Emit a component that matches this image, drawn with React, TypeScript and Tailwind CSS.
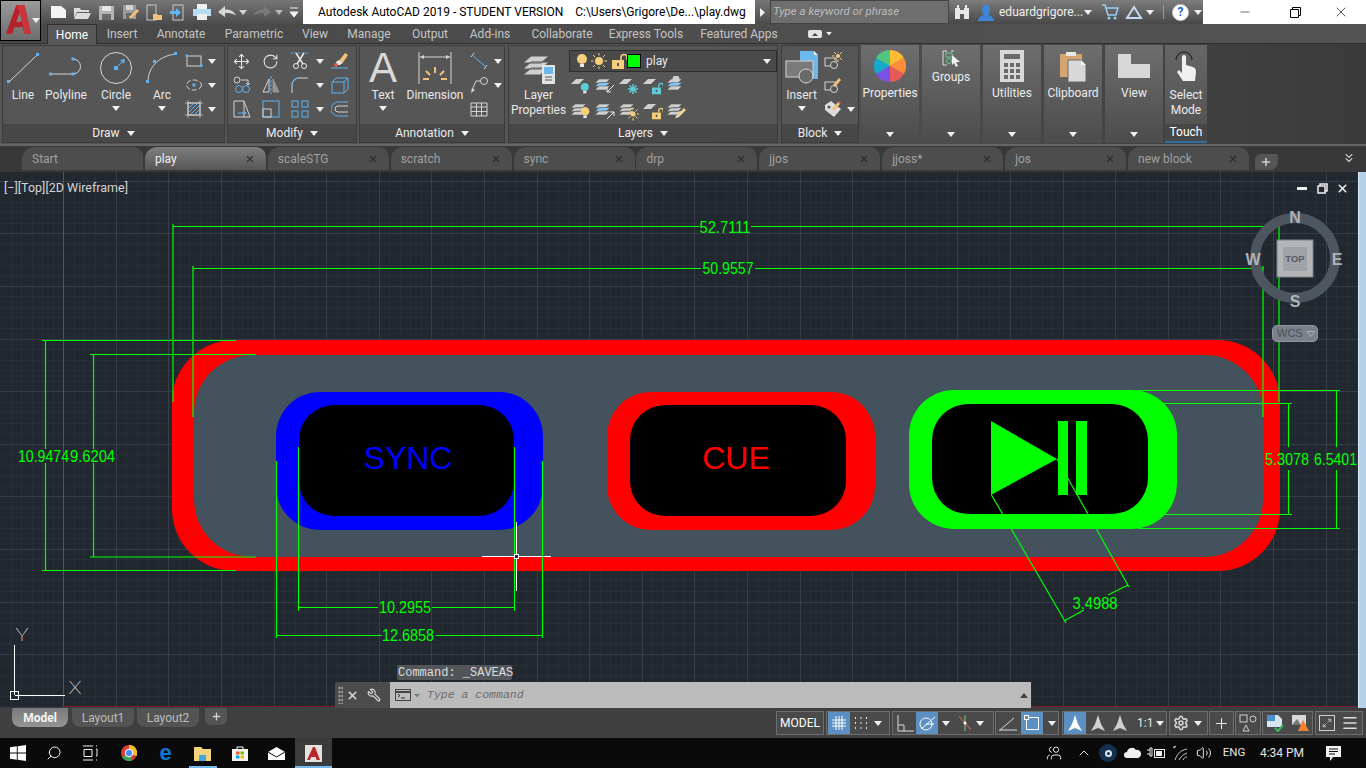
import type { ReactNode } from 'react';
import { Move, RotateCw, Minus, Plus, X, Search, Settings, Volume2, ChevronUp, ChevronsDown, Wrench, Users, Maximize2, Menu } from 'lucide-react';

const GRIP = '#5cb2f2';
const LINE = '#d4d4d4';

/* ---------- small helpers ---------- */

function Caret({ className = '' }: { className?: string }) {
  return (
    <svg width="8" height="5" viewBox="0 0 8 5" className={`block shrink-0 ${className}`}>
      <path d="M0 0h8L4 5z" fill="#f0f0f0" />
    </svg>
  );
}

function Ic({ w = 18, h = 18, children }: { w?: number; h?: number; children: ReactNode }) {
  return (
    <svg width={w} height={h} viewBox={`0 0 ${w} ${h}`} className="block shrink-0" fill="none">
      {children}
    </svg>
  );
}

function Panel({ title, className, children }: { title: string; className: string; children: ReactNode }) {
  return (
    <div className={`flex h-[98px] flex-col bg-[#565656] shadow-[inset_0_0_0_1px_#3c3c3c] ${className}`}>
      <div className="flex flex-1 pt-[4px]">{children}</div>
      <div className="mx-px mb-px flex h-[18px] items-center justify-center gap-[7px] bg-[#474747] text-[#ececec]">
        {title}
        <Caret />
      </div>
    </div>
  );
}

function BigTool({ label, className, icon, caret }: { label: string; className: string; icon: ReactNode; caret?: boolean }) {
  return (
    <div className={`flex flex-col items-center ${className}`}>
      <div className="flex h-[38px] items-center justify-center">{icon}</div>
      <div className="mt-[1px] whitespace-pre-line text-center leading-[15px] text-[#e8e8e8]">{label}</div>
      {caret && <Caret className="mt-[3px]" />}
    </div>
  );
}

function Collapsed({ label, className, icon, labelClass }: { label: string; className: string; icon: ReactNode; labelClass: string }) {
  return (
    <div className={`flex h-[98px] flex-col items-center rounded-[1px] bg-gradient-to-b from-[#6e6e6e] to-[#4c4c4c] ${className}`}>
      <div className="mt-[5px] flex h-[33px] items-start justify-center">{icon}</div>
      <div className={`text-[#ececec] ${labelClass}`}>{label}</div>
      <Caret className="mt-auto mb-[6px]" />
    </div>
  );
}

/* ---------- ribbon icons ---------- */

const LineIcon = () => (
  <Ic w={34} h={33}>
    <path d="M3 30L31 3" stroke={LINE} />
    <rect x="1" y="28" width="3" height="3" fill={GRIP} />
    <rect x="30" y="1" width="3" height="3" fill={GRIP} />
  </Ic>
);
const PolylineIcon = () => (
  <Ic w={36} h={26}>
    <path d="M3 19H25M25 4a7.5 7.5 0 0 1 0 15" stroke={LINE} />
    <rect x="1" y="17.500" width="3" height="3" fill={GRIP} />
    <rect x="23.500" y="17.500" width="3" height="3" fill={GRIP} />
    <rect x="23.500" y="2.500" width="3" height="3" fill={GRIP} />
  </Ic>
);
const CircleIcon = () => (
  <Ic w={34} h={34}>
    <circle cx="17" cy="17" r="15.500" stroke={LINE} />
    <path d="M17 17L25 9" stroke={GRIP} />
    <path d="M26 8l-5 1 4 4z" fill={GRIP} />
    <rect x="15" y="15" width="4" height="4" fill={GRIP} />
  </Ic>
);
const ArcIcon = () => (
  <Ic w={34} h={34}>
    <path d="M3 31C3 17 13 5 31 3" stroke={LINE} />
    <rect x="1" y="29" width="3" height="3" fill={GRIP} />
    <rect x="29" y="1" width="3" height="3" fill={GRIP} />
    <rect x="8" y="9" width="3" height="3" fill={GRIP} />
  </Ic>
);
const RectIcon = () => (
  <Ic w={18} h={14}>
    <rect x="2" y="2" width="14" height="10" stroke={LINE} />
    <rect x="0.500" y="0.500" width="2.500" height="2.500" fill={GRIP} />
    <rect x="15" y="10.500" width="2.500" height="2.500" fill={GRIP} />
  </Ic>
);
const EllipseIcon = () => (
  <Ic w={18} h={14}>
    <ellipse cx="9" cy="7" rx="7.500" ry="5" stroke={LINE} strokeDasharray="5 2" />
    <rect x="7.500" y="5.500" width="3" height="3" fill={GRIP} />
  </Ic>
);
const HatchIcon = () => (
  <Ic w={18} h={18}>
    <rect x="3" y="3" width="12" height="12" stroke={LINE} />
    <path d="M4 12l8-8M6 14l8-8M4 8l4-4M10 14l4-4" stroke={GRIP} />
    <path d="M3 0v18M15 0v18M0 3h18M0 15h18" stroke={LINE} strokeWidth="0.700" />
  </Ic>
);
const TrimIcon = () => (
  <Ic w={18} h={18}>
    <path d="M0 1h18" stroke={GRIP} strokeDasharray="2 1.500" />
    <path d="M5 1l7 11M13 1L6 12" stroke="#e8e8e8" strokeWidth="1.500" />
    <circle cx="5" cy="14" r="2.500" stroke="#e8e8e8" />
    <circle cx="13" cy="14" r="2.500" stroke="#e8e8e8" />
  </Ic>
);
const EraseIcon = () => (
  <Ic w={18} h={18}>
    <path d="M7 10L14 1l3 2-6 9z" fill="#f3c27a" />
    <path d="M5 10l3-2 3 3-2 2H5z" fill="#e8e8e8" />
    <circle cx="5" cy="13" r="2" fill="#e2574c" />
    <path d="M0 16h17" stroke={GRIP} />
  </Ic>
);
const CopyIcon = () => (
  <Ic w={18} h={18}>
    <circle cx="4" cy="4" r="3" stroke={LINE} />
    <path d="M8 4h7v4M13 7l2 2 2-2" stroke={LINE} />
    <circle cx="6" cy="13" r="3.500" stroke={GRIP} />
    <circle cx="13" cy="13" r="3.500" stroke={GRIP} />
  </Ic>
);
const MirrorIcon = () => (
  <Ic w={18} h={18}>
    <path d="M7 3v13H1z" stroke={LINE} />
    <path d="M11 3v13h6z" fill={LINE} opacity=".5" stroke={LINE} />
    <path d="M9 0v18" stroke={GRIP} strokeDasharray="3 1" />
  </Ic>
);
const FilletIcon = () => (
  <Ic w={18} h={18}>
    <path d="M1 17V9a7 7 0 0 1 7-7h9" stroke={LINE} />
    <path d="M1 9a7 7 0 0 1 7-7" stroke={GRIP} />
  </Ic>
);
const BoxIcon = () => (
  <Ic w={18} h={18}>
    <path d="M1 6h12v11H1zM1 6l4-4h12v11l-4 4M13 6l4-4" stroke={GRIP} />
  </Ic>
);
const StretchIcon = () => (
  <Ic w={18} h={18}>
    <path d="M1 1h10v16H1zM11 1l6 16h-6" stroke={LINE} />
    <path d="M5 13h8m-2-2l2 2-2 2" stroke={GRIP} />
  </Ic>
);
const ScaleIcon = () => (
  <Ic w={18} h={18}>
    <rect x="1" y="1" width="16" height="16" stroke={GRIP} />
    <rect x="1" y="9" width="8" height="8" stroke={LINE} />
  </Ic>
);
const ArrayIcon = () => (
  <Ic w={18} h={18}>
    <rect x="1" y="1" width="6" height="6" stroke={GRIP} />
    <rect x="11" y="1" width="6" height="6" stroke={GRIP} />
    <rect x="1" y="11" width="6" height="6" stroke={GRIP} />
    <rect x="11" y="11" width="6" height="6" stroke={GRIP} />
  </Ic>
);
const OffsetIcon = () => (
  <Ic w={18} h={16}>
    <path d="M17 1H7a7 7 0 0 0 0 14h10" stroke={GRIP} />
    <path d="M17 5H7a3 3 0 0 0 0 6h10" stroke={LINE} />
  </Ic>
);
const DimensionIcon = () => (
  <Ic w={34} h={34}>
    <path d="M1 1v32M33 1v32" stroke={LINE} />
    <path d="M2 6h30" stroke={LINE} />
    <path d="M2 6l4-2v4zM32 6l-4-2v4z" fill={LINE} />
    <path d="M17 16v6M8 20l4 4M26 20l-4 4M5 28h6M23 28h6" stroke="#f3c27a" strokeWidth="2" />
  </Ic>
);
const LinearIcon = () => (
  <Ic w={18} h={18}>
    <path d="M4 1L1 5M17 13l-3 4" stroke={LINE} />
    <path d="M2 3l14 12" stroke={GRIP} />
  </Ic>
);
const LeaderIcon = () => (
  <Ic w={18} h={18}>
    <circle cx="14" cy="5" r="3.500" stroke={LINE} />
    <path d="M10 5H6L2 14" stroke={LINE} />
    <path d="M1 17l1-5 3 2z" fill={LINE} />
  </Ic>
);
const TableIcon = () => (
  <Ic w={18} h={15}>
    <path d="M1 1h16v13H1zM1 5h16M1 9.500h16M6.500 1v13M11.500 1v13" stroke={LINE} />
  </Ic>
);
const LayerPropsIcon = () => (
  <Ic w={34} h={34}>
    <path d="M1 12L9 5h18l-8 7zM1 18l8-7h18l-8 7zM1 24l8-7h14l-4 7z" fill="#cfcfcf" stroke="#565656" />
    <rect x="20" y="14" width="13" height="19" rx="1" fill="#e4e4e4" />
    <rect x="22" y="16" width="9" height="7" fill="#6bb7ee" />
    <path d="M23 26h7M23 29h7" stroke="#555" />
  </Ic>
);
const Bulb = ({ color = '#f7cf7a' }: { color?: string }) => (
  <>
    <circle cx="6" cy="5" r="5" fill={color} />
    <rect x="4" y="10" width="4" height="3" fill="#e8e8e8" />
  </>
);
const Sun = ({ color = '#f7cf7a', cx = 8, cy = 8, r = 4 }: { color?: string; cx?: number; cy?: number; r?: number }) => (
  <>
    <circle cx={cx} cy={cy} r={r} fill={color} />
    <path
      d={`M${cx} ${cy - r - 4}v2.500M${cx} ${cy + r + 1.5}v2.500M${cx - r - 4} ${cy}h2.500M${cx + r + 1.5} ${cy}h2.500M${cx - r - 2} ${cy - r - 2}l2 2M${cx + r} ${cy + r}l2 2M${cx + r + 2} ${cy - r - 2}l-2 2M${cx - r} ${cy + r}l-2 2`}
      stroke={color}
    />
  </>
);
const Lock = ({ color = '#f7cf7a', x = 0, y = 0, s = 1 }: { color?: string; x?: number; y?: number; s?: number }) => (
  <g transform={`translate(${x} ${y}) scale(${s})`}>
    <path d="M9 6V3.500a3 3 0 0 1 6 0V6" stroke={color} strokeWidth="1.600" />
    <rect x="0" y="6" width="12" height="9" fill={color} />
    <rect x="5" y="9" width="2" height="3" fill="#565656" />
  </g>
);

function Plane({ kind, children }: { kind: 'one' | 'stack' | 'blue'; children?: ReactNode }) {
  return (
    <Ic w={20} h={20}>
      {kind === 'one' && <path d="M0 8l5-5h8l-5 5z" fill="#cfcfcf" />}
      {kind === 'stack' && <path d="M0 7l4-4h11l-4 4zM0 10.500l4-4h11l-4 4zM0 14l4-4h11l-4 4z" fill="#cfcfcf" stroke="#565656" strokeWidth=".6" />}
      {kind === 'blue' && (
        <>
          <path d="M0 7l4-4h11l-4 4z" fill="#cfcfcf" stroke="#565656" strokeWidth=".6" />
          <path d="M0 10.500l4-4h11l-4 4z" fill="#7fc4f2" stroke="#565656" strokeWidth=".6" />
          <path d="M0 14l4-4h11l-4 4z" fill="#cfcfcf" stroke="#565656" strokeWidth=".6" />
        </>
      )}
      {children}
    </Ic>
  );
}

const layerRowIcons = [
  <Plane kind="one"><g transform="translate(9 7) scale(.8)"><Bulb color="#5fcbd9" /></g></Plane>,
  <Plane kind="blue"><path d="M19 9l-7 7m0-4v4h4" stroke="#e8e8e8" /></Plane>,
  <Plane kind="one"><path d="M14 8v10M9 13h10M10.500 9.500l7 7M17.500 9.500l-7 7" stroke="#5fcbd9" strokeWidth="1.500" /></Plane>,
  <Plane kind="one"><Lock color="#5fcbd9" x={9} y={7} s={0.75} /></Plane>,
  <Plane kind="blue"><circle cx="9" cy="3" r="3.500" fill="#cfcfcf" /></Plane>,
  <Plane kind="stack"><g transform="translate(9 6) scale(.85)"><Bulb /></g></Plane>,
  <Plane kind="blue"><path d="M12 18l7-7m0 4v-4h-4" stroke="#e8e8e8" /></Plane>,
  <Plane kind="stack"><Sun cx={14} cy={13} r={2.5} /></Plane>,
  <Plane kind="one"><Lock x={9} y={7} s={0.75} /></Plane>,
  <Plane kind="stack"><path d="M10 14l7-7 2 2-7 7z" fill="#f3d38f" /><path d="M10 14l-2 3 4-1z" fill="#fff" /></Plane>,
];

const InsertIcon = () => (
  <Ic w={34} h={34}>
    <path d="M15 0h14l4 4v24H15z" fill="#6bb7ee" />
    <path d="M29 0l4 4h-4z" fill="#e8e8e8" />
    <rect x="1" y="10" width="27" height="16" fill="#7b7b7b" stroke="#d4d4d4" />
    <circle cx="21" cy="25" r="7" fill="#6a6a6a" stroke="#d4d4d4" />
  </Ic>
);
const BlockSmall = ({ accent }: { accent: 'sun' | 'pen' }) => (
  <Ic w={18} h={18}>
    <rect x="1" y="6" width="11" height="8" stroke="#d4d4d4" />
    <circle cx="10" cy="13" r="3.500" fill="#565656" stroke="#d4d4d4" />
    {accent === 'sun' ? <Sun cx={14} cy={4} r={2} /> : <path d="M9 9l6-7 2 2-6 7z" fill="#f3c27a" />}
  </Ic>
);
const TagIcon = () => (
  <Ic w={18} h={18}>
    <path d="M1 5l6-4 10 8-7 8-9-7z" fill="#dcdcdc" />
    <circle cx="5" cy="7" r="1.500" fill="#565656" />
    <path d="M8 9l6-7 2 2-6 7z" fill="#f3c27a" />
    <path d="M14 2l2 2 1-1-2-2z" fill="#e2574c" />
  </Ic>
);

const wheel = ['#ffbb33', '#ff8c3a', '#e85a57', '#7b4fe8', '#17a9c9', '#4fc77f'];
const ColorWheel = () => (
  <svg width="32" height="32" viewBox="-16 -16 32 32" className="block">
    {wheel.map((c, i) => {
      const a = (i * Math.PI) / 3 - Math.PI / 2;
      const b = a + Math.PI / 3;
      const p = `M0 0L${16 * Math.cos(a)} ${16 * Math.sin(a)}A16 16 0 0 1 ${16 * Math.cos(b)} ${16 * Math.sin(b)}z`;
      return <path key={c} d={p} fill={c} />;
    })}
  </svg>
);
const GroupsIcon = () => (
  <Ic w={18} h={17}>
    <path d="M5 1H1v14h4M9 1h3" stroke="#dcdcdc" />
    <rect x="4" y="3" width="6" height="4" stroke="#5fd08a" />
    <circle cx="7" cy="11" r="2.500" stroke="#5fd08a" />
    <path d="M10 5l8 7h-4l2 4-2 1-2-4-2 2z" fill="#f0f0f0" />
  </Ic>
);
const CalcIcon = () => (
  <svg width="24" height="32" viewBox="0 0 24 32" className="block">
    <rect width="24" height="32" fill="#d8d8d8" />
    <rect x="4" y="4" width="16" height="5" fill="#6a6a6a" />
    {[13, 19, 25].flatMap((y) => [4, 10, 16].map((x) => <rect key={`${x}-${y}`} x={x} y={y} width="4" height="4" fill="#6a6a6a" />))}
  </svg>
);
const ClipboardIcon = () => (
  <svg width="26" height="32" viewBox="0 0 26 32" className="block">
    <rect x="0" y="4" width="22" height="23" fill="#d6a56f" />
    <rect x="6" y="2" width="10" height="4" fill="#e8e8e8" />
    <path d="M8 10h13l5 5v17H8z" fill="#d8d8d8" stroke="#6a6a6a" />
    <path d="M21 10l5 5h-5z" fill="#f4f4f4" />
  </svg>
);
const ViewIcon = () => (
  <svg width="32" height="24" viewBox="0 0 32 24" className="mt-[4px] block">
    <path d="M0 0h13v10h19v14H0z" fill="#d8d8d8" />
  </svg>
);
const TouchIcon = () => (
  <svg width="24" height="32" viewBox="0 0 24 32" className="block">
    <path d="M2 10a8 8 0 0 1 16 0" stroke="#2a2a2a" strokeWidth="1.300" fill="none" />
    <path d="M8 7a2 2 0 0 1 4 0v8l7 2c2 1 3 2 3 5l-1 9H9l-6-9 2-2 3 3z" fill="#f0f0f0" />
  </svg>
);

/* ---------- title bar ---------- */

const qaIcons = [
  <Ic w={17} h={14}><path d="M1 1h10l5 4v8H1z" fill="#f4f4f4" /></Ic>,
  <Ic w={17} h={14}><path d="M0 3h6l1 2h8v2H3l-3 6zM3 8h14l-3 6H0z" fill="#dcdcdc" /></Ic>,
  <Ic w={17} h={15}><path d="M1 1h15v14H1z" fill="#b4b4b4" /><rect x="4" y="1" width="9" height="5" fill="#e4e4e4" /><rect x="4" y="9" width="9" height="6" fill="#6a6a6a" /></Ic>,
  <Ic w={17} h={16}><path d="M1 1h13v14H1z" fill="#9a9a9a" /><rect x="4" y="1" width="7" height="5" fill="#d4d4d4" /><rect x="4" y="9" width="7" height="6" fill="#6a6a6a" /><path d="M7 13l8-8 2 2-8 8z" fill="#f3c27a" /></Ic>,
  <Ic w={17} h={17}><rect x="1" y="1" width="9" height="15" stroke="#c8c8c8" /><path d="M7 10h4l1 1h4v5H7z" fill="#f3c27a" /></Ic>,
  <Ic w={17} h={17}><rect x="3" y="1" width="10" height="15" stroke="#c8c8c8" /><path d="M0 7h6V4l5 4.500L6 13v-3H0z" fill="#62b8f0" /></Ic>,
  <Ic w={18} h={16}><rect x="4" y="0" width="10" height="5" fill="#efefef" /><rect x="0" y="5" width="18" height="7" fill="#b8dcf4" /><rect x="4" y="10" width="10" height="6" fill="#efefef" /></Ic>,
];

function TitleBar() {
  return (
    <div className="flex h-[24px] shrink-0 items-stretch">
      <div className="flex w-[303px] items-center bg-gradient-to-b from-[#767676] to-[#4c4c4c] pl-[46px]">
        {qaIcons.map((ic, i) => (
          <div key={i} className="flex w-[24px] justify-center">{ic}</div>
        ))}
        <div className="flex w-[25px] justify-center">
          <Ic w={18} h={12}><path d="M0 6l7-6v3.500c5 0 9 1.500 11 6-3-2-6-2.500-11-2.500V11z" fill="#d8d8d8" /></Ic>
        </div>
        <Caret className="opacity-80" />
        <div className="ml-[4px] flex w-[22px] justify-center">
          <Ic w={18} h={12}><path d="M18 6l-7-6v3.500C6 3.500 2 5 0 9.500c3-2 6-2.500 11-2.500V11z" fill="#7a7a7a" /></Ic>
        </div>
        <Caret className="ml-[2px] opacity-60" />
        <div className="ml-[6px]">
          <Ic w={10} h={11}><path d="M1 1h8M1 5h8L5 10z" stroke="#f0f0f0" fill="#f0f0f0" /></Ic>
        </div>
      </div>
      <div className="flex w-[452px] items-center whitespace-pre bg-white pl-[15px] text-black">
        Autodesk AutoCAD 2019 - STUDENT VERSION    C:\Users\Grigore\De...\play.dwg
      </div>
      <div className="flex w-[15px] items-center justify-center bg-gradient-to-b from-[#767676] to-[#4c4c4c]">
        <svg width="5" height="9" viewBox="0 0 5 9" className="block"><path d="M0 0l5 4.500L0 9z" fill="#f0f0f0" /></svg>
      </div>
      <div className="flex w-[179px] items-center border border-[#444] bg-[#6e6e6e] pl-[2px] text-[11.500px] italic text-[#bdbdbd]">
        Type a keyword or phrase
      </div>
      <div className="flex w-[254px] items-center bg-gradient-to-b from-[#7d7d7d] to-[#484848] text-[#f0f0f0]">
        <div className="ml-[5px]">
          <Ic w={16} h={16}><path d="M1 4h5v11H1zM10 4h5v11h-5zM3 1h2v3H3zM11 1h2v3h-2zM6 6h4v4H6z" fill="#e8e8e8" /></Ic>
        </div>
        <div className="ml-[7px]">
          <Ic w={18} h={17}><ellipse cx="9" cy="6" rx="4" ry="5.500" fill="#3d87d8" /><path d="M1 17c1-5 4-6 8-6s7 1 8 6z" fill="#3d87d8" /></Ic>
        </div>
        <span className="ml-[4px] w-[85px] whitespace-nowrap">eduardgrigore...</span>
        <Caret />
        <div className="ml-[10px]">
          <Ic w={17} h={16}><path d="M0 1h3l3 10h8l2-7H4" stroke="#9ad0f4" strokeWidth="1.500" /><circle cx="7" cy="14" r="1.500" fill="#9ad0f4" /><circle cx="13" cy="14" r="1.500" fill="#9ad0f4" /></Ic>
        </div>
        <div className="ml-[6px]">
          <Ic w={18} h={15}><path d="M9 2l7 11H2z" stroke="#c8d8f4" strokeWidth="2" /></Ic>
        </div>
        <Caret className="ml-[3px]" />
        <div className="ml-[9px] h-[14px] w-px bg-[#999]" />
        <div className="ml-[8px] flex h-[17px] w-[17px] items-center justify-center rounded-full border border-[#ccd] bg-white text-[12px] font-bold text-[#1f5fc0]">?</div>
        <Caret className="ml-[5px]" />
      </div>
      <div className="flex flex-1 items-center bg-white pl-[35px]">
        <Minus size={14} strokeWidth={1} className="text-black" />
        <svg width="11" height="11" viewBox="0 0 11 11" className="ml-[38px] block" fill="none"><path d="M.5 2.500h8v8h-8zM2.500 2.500v-2h8v8h-2" stroke="#000" /></svg>
        <X size={16} strokeWidth={1} className="ml-[32px] text-black" />
      </div>
    </div>
  );
}

/* ---------- ribbon ---------- */

const ribbonTabs = [
  { name: 'Home', w: 'w-[50px]' },
  { name: 'Insert', w: 'w-[50px]' },
  { name: 'Annotate', w: 'w-[68px]' },
  { name: 'Parametric', w: 'w-[78px]' },
  { name: 'View', w: 'w-[44px]' },
  { name: 'Manage', w: 'w-[64px]' },
  { name: 'Output', w: 'w-[58px]' },
  { name: 'Add-ins', w: 'w-[62px]' },
  { name: 'Collaborate', w: 'w-[82px]' },
  { name: 'Express Tools', w: 'w-[86px]' },
  { name: 'Featured Apps', w: 'w-[100px]' },
];

function RibbonTabs() {
  return (
    <div className="flex h-[20px] shrink-0 items-stretch border-b border-[#2f2f2f] bg-gradient-to-r from-[#484848] to-[#535353] pl-[47px] text-[#c4c4c4]">
      {ribbonTabs.map((t) => (
        <div
          key={t.name}
          className={`flex items-center justify-center ${t.w} ${t.name === 'Home' ? 'z-10 -mb-px border-x border-t border-[#2f2f2f] bg-[#585858] text-white' : ''}`}
        >
          {t.name}
        </div>
      ))}
      <div className="ml-[19px] flex items-center gap-[3px]">
        <svg width="14" height="8" viewBox="0 0 14 8" className="block"><rect width="14" height="8" rx="2" fill="#e4e4e4" /><path d="M4 6l3-3 3 3z" fill="#444" /></svg>
        <Caret className="scale-75" />
      </div>
    </div>
  );
}

const SmallTools = ({ items, className }: { items: ReactNode[]; className: string }) => (
  <div className={`grid content-start items-center justify-items-center ${className}`}>
    {items.map((it, i) => (
      <div key={i} className="flex h-[24px] items-center justify-center">{it}</div>
    ))}
  </div>
);

const lu = { size: 17, strokeWidth: 1.5, color: '#e4e4e4' };

function Ribbon() {
  return (
    <div className="flex h-[100px] shrink-0 items-start bg-gradient-to-r from-[#565656] via-[#555555] to-[#3a3a3a] pl-[2px] pt-[1px]">
      <Panel title="Draw" className="w-[223px]">
        <BigTool label="Line" className="w-[42px]" icon={<LineIcon />} />
        <BigTool label="Polyline" className="w-[44px]" icon={<PolylineIcon />} />
        <BigTool label="Circle" className="w-[56px]" icon={<CircleIcon />} caret />
        <BigTool label="Arc" className="w-[36px]" icon={<ArcIcon />} caret />
        <SmallTools
          className="ml-[2px] grid-cols-[24px_12px]"
          items={[<RectIcon />, <Caret />, <EllipseIcon />, <Caret />, <HatchIcon />, <Caret />]}
        />
      </Panel>
      <Panel title="Modify" className="ml-[2px] w-[130px]">
        <SmallTools
          className="grid-cols-[29px_29px_29px_12px_28px]"
          items={[
            <Move {...lu} />, <RotateCw {...lu} />, <TrimIcon />, <Caret />, <EraseIcon />,
            <CopyIcon />, <MirrorIcon />, <FilletIcon />, <Caret />, <BoxIcon />,
            <StretchIcon />, <ScaleIcon />, <ArrayIcon />, <Caret />, <OffsetIcon />,
          ]}
        />
      </Panel>
      <Panel title="Annotation" className="ml-[2px] w-[146px]">
        <BigTool
          label="Text"
          className="w-[46px] pl-[2px]"
          caret
          icon={<span className="block h-[36px] font-['Liberation_Sans',sans-serif] text-[42px] leading-[36px] text-[#d8d8d8]">A</span>}
        />
        <BigTool label="Dimension" className="w-[60px]" icon={<DimensionIcon />} />
        <SmallTools className="ml-[1px] grid-cols-[26px_12px]" items={[<LinearIcon />, <Caret />, <LeaderIcon />, <Caret />, <TableIcon />, <span />]} />
      </Panel>
      <Panel title="Layers" className="ml-[3px] w-[270px]">
        <BigTool label={'Layer\nProperties'} className="w-[61px]" icon={<LayerPropsIcon />} />
        <div className="flex flex-col">
          <div className="mt-[1px] flex h-[22px] w-[208px] items-center border border-[#2e2e2e] bg-[#4a4a4a] pr-[5px]">
            <div className="ml-[6px]"><Ic w={12} h={14}><Bulb /></Ic></div>
            <div className="ml-[3px]"><Ic w={16} h={16}><Sun /></Ic></div>
            <div className="ml-[5px]"><Ic w={16} h={16}><Lock y={1} /></Ic></div>
            <div className="ml-[-1px] h-[14px] w-[14px] border border-black bg-[#00ff00]" />
            <span className="ml-[5px] text-[#e8e8e8]">play</span>
            <Caret className="ml-auto" />
          </div>
          <div className="mt-[1px] grid w-[120px] grid-cols-5 justify-items-center">
            {layerRowIcons.map((ic, i) => (
              <div key={i} className="flex h-[25px] items-center">{ic}</div>
            ))}
          </div>
        </div>
      </Panel>
      <Panel title="Block" className="ml-[3px] w-[78px]">
        <BigTool label="Insert" className="w-[41px]" icon={<InsertIcon />} caret />
        <div className="flex flex-col pl-[2px]">
          <div className="flex h-[24px] items-center"><BlockSmall accent="sun" /></div>
          <div className="flex h-[24px] items-center"><BlockSmall accent="pen" /></div>
          <div className="flex h-[24px] items-center gap-[5px]"><TagIcon /><Caret /></div>
        </div>
      </Panel>
      <Collapsed label="Properties" className="ml-[2px] w-[58px]" labelClass="mt-[1px]" icon={<ColorWheel />} />
      <Collapsed label="Groups" className="ml-[3px] w-[58px]" labelClass="-mt-[15px]" icon={<GroupsIcon />} />
      <Collapsed label="Utilities" className="ml-[3px] w-[58px]" labelClass="mt-[1px]" icon={<CalcIcon />} />
      <Collapsed label="Clipboard" className="ml-[3px] w-[58px]" labelClass="mt-[1px]" icon={<ClipboardIcon />} />
      <Collapsed label="View" className="ml-[3px] w-[58px]" labelClass="mt-[1px]" icon={<ViewIcon />} />
      <div className="ml-[2px] flex h-[98px] w-[42px] flex-col items-center bg-gradient-to-b from-[#666666] to-[#505050] text-[#ececec]">
        <div className="mt-[5px]"><TouchIcon /></div>
        <div className="mt-[6px] text-center leading-[15px]">Select<br />Mode</div>
        <div className="mt-auto w-full border-b-2 border-[#2f6f9f] bg-[#474747] text-center leading-[17px] text-white">Touch</div>
      </div>
    </div>
  );
}

/* ---------- document tabs ---------- */

const docTabs = ['Start', 'play', 'scaleSTG', 'scratch', 'sync', 'drp', 'jjos', 'jjoss*', 'jos', 'new block'];

function DocTabs() {
  return (
    <div className="flex h-[28px] shrink-0 items-end border-t-2 border-[#666] bg-[#383838] pb-[2px] pl-[22px]">
      {docTabs.map((t, i) => {
        const active = t === 'play';
        return (
          <div
            key={t}
            className={`mr-[1.900px] flex h-[23px] w-[121px] items-center justify-between rounded-tl-[12px] rounded-tr-[10px] pl-[10px] pr-[11px] ${
              active ? 'bg-gradient-to-b from-[#7f7f7f] to-[#565656] text-[#f0f0f0]' : 'bg-[#4d4d4d] text-[#a0a0a0]'
            }`}
          >
            {t}
            {i > 0 && <X size={10} strokeWidth={3} className={active ? 'text-[#333]' : 'text-[#2e2e2e]'} />}
          </div>
        );
      })}
      <div className="ml-[4px] flex h-[16px] w-[23px] items-center justify-center rounded-tl-[6px] rounded-br-[8px] bg-[#555]">
        <Plus size={12} strokeWidth={3} className="text-[#d0d0d0]" />
      </div>
      <ChevronsDown size={14} strokeWidth={2} className="ml-[64px] self-center text-[#c8c8c8]" />
    </div>
  );
}

/* ---------- drawing canvas ---------- */

const GREEN = '#00ff00';

function DimText({ x, y, w, children }: { x: number; y: number; w: number; children: string }) {
  return (
    <text x={x} y={y} textAnchor="middle" textLength={w} lengthAdjust="spacingAndGlyphs" fill={GREEN} fontSize="16" className="font-['Liberation_Sans',sans-serif]">
      {children}
    </text>
  );
}

const majorX = Array.from({ length: 26 }, (_, i) => 63.2 + 52.6 * i);
const majorY = Array.from({ length: 11 }, (_, i) => 706.7 - 52.6 * i);
const minorX = Array.from({ length: 131 }, (_, i) => 63.2 - 52.6 + 10.52 * i);
const minorY = Array.from({ length: 52 }, (_, i) => 706.7 - 10.52 * i);

const dimLines = [
  // overall width
  'M173 224V402M1279 223V402M173 226.500H699M751 226.500H1279',
  'M193 266V417M1263 266V417M193 268.500H701M755 268.500H1263',
  // left heights
  'M42 340.500H236M42 570.500H236M45.500 340.500V449M45.500 463V570.500',
  'M90 354.500H256M90 557H256M93.500 354.500V449M93.500 463V557',
  // sync widths
  'M298.500 447V611M514.500 447V611M298.500 607.500H378M432 607.500H514.500',
  'M276.500 461V638M542.500 461V638M276.500 635.500H382M436 635.500H542.500',
  // right heights
  'M1160 403.500H1292M1160 514.500H1292M1288.500 403.500V447M1288.500 470V514.500',
  'M1138 390.500H1340M1138 528.500H1340M1336.500 390.500V447M1336.500 470V528.500',
  // aligned
  'M991.500 495L1066 623M1057 459L1129 587M1065 620.500L1084 610M1108 595L1128 585',
];

function Drawing() {
  return (
    <svg viewBox="0 172 1366 536" className="block h-full w-full" shapeRendering="crispEdges">
      <rect x="0" y="172" width="1366" height="536" fill="#212830" />
      {minorX.map((x) => <path key={`mx${x}`} d={`M${Math.round(x) + 0.5} 172V708`} stroke="#272e38" />)}
      {minorY.map((y) => <path key={`my${y}`} d={`M0 ${Math.round(y) + 0.5}H1366`} stroke="#272e38" />)}
      {majorX.map((x) => <path key={`Mx${x}`} d={`M${Math.round(x) + 0.5} 172V708`} stroke="#363d4b" />)}
      {majorY.map((y) => <path key={`My${y}`} d={`M0 ${Math.round(y) + 0.5}H1366`} stroke="#363d4b" />)}
      <path d="M63.500 172V707" stroke="#1c7a26" />
      <path d="M63.500 706.500H1366" stroke="#7a1f26" />

      <g shapeRendering="auto">
        <rect x="172" y="340" width="1108" height="231" rx="62" fill="#ff0000" />
        <rect x="194" y="355" width="1069" height="202" rx="58" fill="#43525c" />

        <rect x="276" y="392" width="267" height="138" rx="44" fill="#0000ff" />
        <rect x="299" y="405" width="215" height="111" rx="35" fill="#000" />
        <text x="408" y="469" textAnchor="middle" fill="#0000ff" fontSize="32" className="font-['Liberation_Sans',sans-serif]">SYNC</text>

        <rect x="607" y="392" width="268" height="138" rx="44" fill="#ff0000" />
        <rect x="630" y="405" width="216" height="111" rx="35" fill="#000" />
        <text x="736" y="469" textAnchor="middle" fill="#ff0000" fontSize="32" className="font-['Liberation_Sans',sans-serif]">CUE</text>

        <rect x="909" y="390" width="268" height="139" rx="45" fill={GREEN} />
        <rect x="932" y="404" width="216" height="110" rx="36" fill="#000" />
        <path d="M991 421V495L1057 459z" fill={GREEN} />
        <rect x="1058" y="421" width="10" height="74" fill={GREEN} />
        <rect x="1076" y="421" width="11" height="74" fill={GREEN} />
      </g>

      {dimLines.map((d) => <path key={d} d={d} stroke={GREEN} shapeRendering="auto" strokeWidth="1.200" fill="none" />)}

      <DimText x={725} y={233} w={51}>52.7111</DimText>
      <DimText x={728} y={274} w={51}>50.9557</DimText>
      <DimText x={43.500} y={461.500} w={51}>10.9474</DimText>
      <DimText x={92.500} y={461.500} w={45}>9.6204</DimText>
      <DimText x={405} y={613} w={52}>10.2955</DimText>
      <DimText x={408} y={641} w={52}>12.6858</DimText>
      <DimText x={1287} y={465} w={44}>5.3078</DimText>
      <DimText x={1335.500} y={465} w={43}>6.5401</DimText>
      <DimText x={1095} y={609} w={45}>3.4988</DimText>

      {/* crosshair */}
      <path d="M482 556.500H551M516.500 522V591" stroke="#fff" />
      <rect x="514.500" y="554.500" width="4" height="4" fill="#212830" stroke="#fff" />

      {/* ucs icon */}
      <path d="M14.500 645V695M14.500 695.500H65" stroke="#fff" />
      <rect x="10.500" y="691" width="8" height="8" fill="none" stroke="#fff" />
      <g shapeRendering="auto" className="font-['Roboto',sans-serif]" fill="#f0f0f0" fontWeight="100" textAnchor="middle">
        <text x="22" y="641" fontSize="18" textLength="13" lengthAdjust="spacingAndGlyphs">Y</text>
        <text x="75" y="694" fontSize="18" textLength="13" lengthAdjust="spacingAndGlyphs">X</text>
      </g>

      {/* view cube */}
      <g shapeRendering="auto">
        <circle cx="1295" cy="258" r="40" fill="none" stroke="#4d555f" strokeWidth="10" />
        <rect x="1277" y="240" width="36" height="37" fill="#b3b5b7" stroke="#7d8288" />
        <rect x="1283" y="247" width="24" height="24" fill="#a0a4a9" />
        <text x="1295" y="262" textAnchor="middle" fill="#575c62" fontSize="9.500" fontWeight="700" className="font-['Liberation_Sans',sans-serif]">TOP</text>
        <g fill="#b0b2b5" fontSize="16" fontWeight="700" textAnchor="middle" className="font-['Liberation_Sans',sans-serif]">
          <text x="1295" y="223">N</text>
          <text x="1295" y="307">S</text>
          <text x="1337" y="265">E</text>
          <text x="1253" y="265">W</text>
        </g>
      </g>
    </svg>
  );
}

function Canvas() {
  return (
    <div className="relative h-[536px] shrink-0 overflow-hidden">
      <Drawing />
      <div className="absolute left-[4px] top-[7px] text-[12.500px] text-[#d4d4d4]">[−][Top][2D Wireframe]</div>
      <div className="absolute left-[1297px] top-[10px] flex items-center text-white">
        <div className="h-[3px] w-[10px] bg-[#eee]" />
        <svg width="11" height="11" viewBox="0 0 11 11" className="ml-[10px] block" fill="none"><path d="M1 3h7v7H1zM3 3V1h7v7H8" stroke="#eee" strokeWidth="1.500" /></svg>
        <X size={13} strokeWidth={3} className="ml-[8px] text-[#eee]" />
      </div>
      <div className="absolute left-[1272px] top-[153px] flex h-[17px] w-[46px] items-center gap-[3px] rounded-[5px] border border-[#9096a0] bg-[#7b818b] pl-[4px] font-['Liberation_Sans',sans-serif] text-[11px] text-[#4a4e56]">
        WCS
        <svg width="10" height="6" viewBox="0 0 10 6" className="block"><path d="M1 .5h8l-4 5z" fill="none" stroke="#a8acb2" /></svg>
      </div>
      <div className="absolute bottom-0 right-0 top-0 w-[8px] border-l border-[#d5e9f8] bg-[#b6d1ea]" />
      <div className="absolute left-[397px] top-[493px] flex h-[15px] w-[115px] items-center whitespace-pre rounded-[2px] bg-[#52565a] pl-[1px] font-['Liberation_Mono',monospace] text-[12px] text-[#dcdcdc]">
        Command: _SAVEAS
      </div>
      <div className="absolute bottom-0 left-[335px] flex h-[26px] w-[696px]">
        <div className="flex w-[55px] items-center rounded-l-[2px] bg-[#4c4c4c] pl-[3px]">
          <div className="h-[18px] w-[5px] bg-[radial-gradient(#999_1px,transparent_1.200px)] bg-[length:3px_4px]" />
          <X size={13} strokeWidth={3} className="ml-[3px] text-[#d8d8d8]" />
          <Wrench size={14} strokeWidth={2} className="ml-[8px] -scale-x-100 text-[#d8d8d8]" />
        </div>
        <div className="flex flex-1 items-center bg-[#bcbcbc]">
          <svg width="16" height="12" viewBox="0 0 16 12" className="ml-[5px] block" fill="none"><rect x=".5" y=".5" width="15" height="11" stroke="#444" /><path d="M.5 3h15" stroke="#444" strokeWidth="2" /><path d="M3 5l2 1.500L3 8M6 9h4" stroke="#333" /></svg>
          <Caret className="ml-[2px] scale-75 brightness-50" />
          <span className="ml-[6px] font-['Liberation_Mono',monospace] text-[11.500px] italic text-[#6c6c6c]">Type a command</span>
          <svg width="8" height="5" viewBox="0 0 8 5" className="ml-auto mr-[3px] block"><path d="M0 5h8L4 0z" fill="#444" /></svg>
        </div>
      </div>
    </div>
  );
}

/* ---------- layout tabs + status bar ---------- */

function Seg({ className, children }: { className: string; children: ReactNode }) {
  return <div className={`flex h-[24px] items-center justify-around border border-[#6e6e6e] bg-[#4a4a4a] ${className}`}>{children}</div>;
}
const Active = ({ children, className = 'w-[22px]' }: { children: ReactNode; className?: string }) => (
  <div className={`flex h-[22px] items-center justify-center bg-[#5c8fc2] ${className}`}>{children}</div>
);
const Anno = ({ color = '#e6e6e6' }: { color?: string }) => (
  <Ic w={14} h={16}><path d="M7 0l3 9 4 7-7-3-7 3 4-7z" fill={color} /></Ic>
);

function LayoutBar() {
  return (
    <div className="flex h-[30px] shrink-0 items-start bg-[#3f3f3f]">
      <div className="flex pl-[12px]">
        <div className="flex h-[19px] w-[56px] items-center justify-center rounded-b-[8px] rounded-tl-[2px] bg-gradient-to-b from-[#7a7a7a] to-[#959595] font-bold text-[#f4f4f4]">Model</div>
        <div className="ml-[4px] flex h-[19px] w-[62px] items-center justify-center rounded-b-[8px] bg-[#545454] text-[#bcbcbc]">Layout1</div>
        <div className="ml-[3px] flex h-[19px] w-[62px] items-center justify-center rounded-b-[8px] bg-[#545454] text-[#bcbcbc]">Layout2</div>
        <div className="ml-[6px] flex h-[17px] w-[22px] items-center justify-center rounded-b-[6px] bg-[#555]">
          <Plus size={11} strokeWidth={3} className="text-[#d0d0d0]" />
        </div>
      </div>
      <div className="ml-[549px] mt-[3px] flex items-center gap-[1px]">
        <Seg className="w-[48px] text-white">MODEL</Seg>
        <Seg className="ml-[1px] w-[64px] justify-start pl-[1px]">
          <Active><Ic w={16} h={16}><path d="M1 5h14M1 8h14M1 11h14M5 1v14M8 1v14M11 1v14" stroke="#fff" /></Ic></Active>
          <div className="ml-[4px]"><Ic w={14} h={14}><path d="M1 2h1M6.500 2h1M12 2h1M1 7h1M6.500 7h1M12 7h1M1 12h1M6.500 12h1M12 12h1" stroke="#e0e0e0" strokeWidth="2" /></Ic></div>
          <Caret className="ml-[6px]" />
        </Seg>
        <Seg className="ml-[1px] w-[102px] justify-start pl-[3px]">
          <Ic w={18} h={18}><path d="M2 1v16h16M2 11h6v6" stroke="#dcdcdc" /></Ic>
          <Active className="ml-[2px] w-[22px]"><Ic w={18} h={18}><circle cx="8" cy="10" r="6" stroke="#fff" /><path d="M3 15L17 3M8 10h8" stroke="#fff" /></Ic></Active>
          <Caret className="ml-[4px]" />
          <div className="ml-[7px]"><Ic w={16} h={18}><path d="M2 2l12 14" stroke="#e06a6a" /><path d="M8 1v16" stroke="#6ad06a" /><circle cx="8" cy="9" r="1.500" fill="#fff" /></Ic></div>
          <Caret className="ml-[3px]" />
        </Seg>
        <Seg className="w-[64px] justify-start pl-[3px]">
          <Ic w={18} h={16}><path d="M0 15h18M1 15L15 3" stroke="#dcdcdc" /></Ic>
          <Active className="ml-[4px] w-[22px]"><Ic w={16} h={16}><rect x="2.500" y="2.500" width="12" height="12" stroke="#fff" /><rect x=".5" y=".5" width="4" height="4" fill="#5c8fc2" stroke="#fff" /></Ic></Active>
          <Caret className="ml-[5px]" />
        </Seg>
        <Seg className="ml-[2px] w-[105px] justify-start pl-[1px]">
          <Active><Anno color="#fff" /></Active>
          <div className="ml-[5px]"><Anno color="#cfcfcf" /></div>
          <div className="ml-[8px]"><Anno color="#cfcfcf" /></div>
          <span className="ml-[10px] text-[#e8e8e8]">1:1</span>
          <Caret className="ml-[3px]" />
        </Seg>
        <Seg className="ml-[1px] w-[39px] justify-start pl-[3px]">
          <Settings size={16} strokeWidth={2.5} color="#d0d0d0" />
          <Caret className="ml-[5px]" />
        </Seg>
        <Seg className="w-[25px]"><Plus size={17} strokeWidth={1.5} color="#e8e8e8" /></Seg>
        <Seg className="w-[26px]">
          <Ic w={18} h={18}><rect x="1" y="1" width="7" height="7" stroke="#d0d0d0" /><circle cx="14" cy="5" r="3" stroke="#d0d0d0" /><path d="M7 11l3 6H4z" stroke="#d0d0d0" /></Ic>
        </Seg>
        <Seg className="w-[51px]">
          <Ic w={18} h={18}><path d="M1 1h11l4 4v8H1z" fill="#d8e4f0" /><rect x="1" y="1" width="8" height="6" fill="#4a90d0" /><path d="M9 14l3 3 5-6" stroke="#3cb85c" strokeWidth="2" /></Ic>
          <Ic w={18} h={18}><path d="M1 1h14v10H1z" fill="#d8d8d8" /><path d="M1 11l5-6 4 6z" fill="#777" /><path d="M12 6l6 11H7z" fill="#f08030" /></Ic>
        </Seg>
        <Seg className="ml-[1px] w-[48px]">
          <div className="flex h-[16px] w-[16px] items-center justify-center border border-[#cfcfcf]"><Maximize2 size={10} color="#cfcfcf" /></div>
          <Menu size={18} strokeWidth={2} color="#dcdcdc" />
        </Seg>
      </div>
    </div>
  );
}

/* ---------- windows taskbar ---------- */

function Taskbar() {
  return (
    <div className="flex h-[30px] shrink-0 items-center bg-[#0b0a0a] text-[#e4e4e4]">
      <div className="flex h-full w-[36px] items-center justify-center">
        <Ic w={16} h={16}><path d="M0 2.300l6.800-1V7.600H0zM7.700 1.200L16 0v7.600H7.700zM0 8.400h6.800v6.300l-6.800-1zM7.700 8.400H16V16l-8.300-1.200z" fill="#fff" /></Ic>
      </div>
      <div className="flex h-full w-[36px] items-center justify-center"><Search size={16} className="-scale-x-100" color="#f4f4f4" strokeWidth={1.5} /></div>
      <div className="flex h-full w-[36px] items-center justify-center">
        <Ic w={16} h={16}><path d="M1 1h10M2 4.500h8v7H2zM1 15h10M14 1h1M14 4h1v7h-1M14 15h1" stroke="#f0f0f0" /></Ic>
      </div>
      <div className="ml-[2px] flex h-full w-[37px] items-center justify-center">
        <svg width="16" height="16" viewBox="-8 -8 16 16" className="block">
          <circle r="8" fill="#d93d2e" />
          <path d="M0 0L-7 4A8 8 0 0 0 3 7.400z" fill="#3aa757" />
          <path d="M0-8A8 8 0 0 1 7.600 3L0 0z" fill="#f6c02c" />
          <circle r="3.800" fill="#4b8df8" stroke="#fff" />
        </svg>
      </div>
      <div className="flex h-full w-[37px] items-center justify-center">
        <span className="font-['Liberation_Sans',sans-serif] text-[22px] font-bold leading-none text-[#0f78d4]">e</span>
      </div>
      <div className="relative flex h-full w-[37px] items-center justify-center">
        <Ic w={17} h={15}><path d="M0 1h7l2 2h8v12H0z" fill="#f3d47d" /><rect x="5" y="9" width="7" height="6" fill="#3ea7e4" /></Ic>
        <div className="absolute bottom-0 left-[5px] h-[2px] w-[28px] bg-[#76b9ed]" />
      </div>
      <div className="flex h-full w-[37px] items-center justify-center">
        <Ic w={16} h={16}><path d="M5 4V2h6v2" stroke="#fff" /><rect y="4" width="16" height="12" fill="#f4f4f4" /><rect x="4" y="6.500" width="3.500" height="3" fill="#e8562a" /><rect x="8.500" y="6.500" width="3.500" height="3" fill="#7cbb00" /><rect x="4" y="10.500" width="3.500" height="3" fill="#00a1f1" /><rect x="8.500" y="10.500" width="3.500" height="3" fill="#ffbb00" /></Ic>
      </div>
      <div className="flex h-full w-[37px] items-center justify-center">
        <Ic w={17} h={13}><path d="M0 5l8.500-5L17 5v8H0z" fill="#fff" /><path d="M0 5l8.500 5L17 5" stroke="#0b0a0a" /></Ic>
      </div>
      <div className="relative flex h-full w-[37px] items-center justify-center bg-[#3b3b3b]">
        <div className="flex h-[17px] w-[17px] items-center justify-center bg-[#e8e0dc]">
          <svg width="13" height="13" viewBox="0 0 13 13" className="block"><path d="M0 13L6 0h2l5 13H9.500L8.800 10H4l-1 3z" fill="#b5272d" /></svg>
        </div>
        <div className="absolute bottom-0 left-0 h-[2px] w-full bg-[#76b9ed]" />
      </div>

      <div className="ml-auto flex items-center pr-[12px]">
        <div className="flex w-[24px] justify-center"><Users size={16} strokeWidth={1.5} className="-scale-x-100" /></div>
        <div className="ml-[6px] flex w-[24px] justify-center"><ChevronUp size={16} strokeWidth={1.5} /></div>
        <div className="flex w-[24px] justify-center">
          <div className="flex h-[18px] w-[18px] items-center justify-center rounded-full bg-[#14304f]">
            <div className="h-[7px] w-[7px] rounded-full border-2 border-[#d8e4f0]" />
          </div>
        </div>
        <div className="flex w-[24px] justify-center">
          <Ic w={17} h={12}><path d="M3 11a3 3 0 0 1 0-6 5 5 0 0 1 9-2 4 4 0 0 1 2 8z" fill="#f0f0f0" /></Ic>
        </div>
        <div className="flex w-[24px] justify-center">
          <Ic w={18} h={12}><path d="M0 3h3M0 7h3M3 1h2v8H3z" stroke="#eee" /><rect x="7.500" y="2.500" width="10" height="8" stroke="#eee" /><rect x="9" y="4" width="6" height="5" fill="#eee" /></Ic>
        </div>
        <div className="flex w-[24px] justify-center">
          <Ic w={16} h={16}><path d="M2 1l1 2M4 1L1 3M15 4C9 5 5 9 3 15M15 8c-3 1-6 3-8 7M15 12c-2 0-3 1-4 3" stroke="#c4c4c4" /></Ic>
        </div>
        <div className="flex w-[24px] justify-center"><Volume2 size={16} strokeWidth={1.5} /></div>
        <div className="w-[36px] text-center text-[11.500px]">ENG</div>
        <div className="w-[60px] text-center text-[12px]">4:34 PM</div>
        <div className="flex w-[42px] justify-center">
          <Ic w={15} h={15}><path d="M0 0h15v11H7l-3 4v-4H0z" fill="#f4f4f4" /><path d="M3 3h9M3 5.500h9M3 8h6" stroke="#0b0a0a" /></Ic>
        </div>
      </div>
    </div>
  );
}

export default function App() {
  return (
    <div className="relative flex h-[768px] w-[1366px] flex-col overflow-hidden bg-[#3f3f3f] font-['Roboto',sans-serif] text-[12px]">
      <TitleBar />
      <RibbonTabs />
      <Ribbon />
      <DocTabs />
      <Canvas />
      <LayoutBar />
      <Taskbar />

      {/* application button sits over the title bar and ribbon tabs */}
      <div className="absolute left-0 top-0 flex h-[41px] w-[41px] border border-black bg-gradient-to-b from-[#9a9a9a] to-[#6e6e6e]">
        <svg width="27" height="31" viewBox="0 0 27 31" className="ml-[5px] mt-[3px] block">
          <path d="M0 31L11 0h9l7 31h-7l-2-7H9l-2 7zM11 18h6l-2-10z" fill="#b6222b" fillRule="evenodd" />
          <path d="M11 0h9l7 31h-7L15 8z" fill="#c9353c" />
        </svg>
        <Caret className="ml-[1px] mt-[17px]" />
      </div>
    </div>
  );
}
